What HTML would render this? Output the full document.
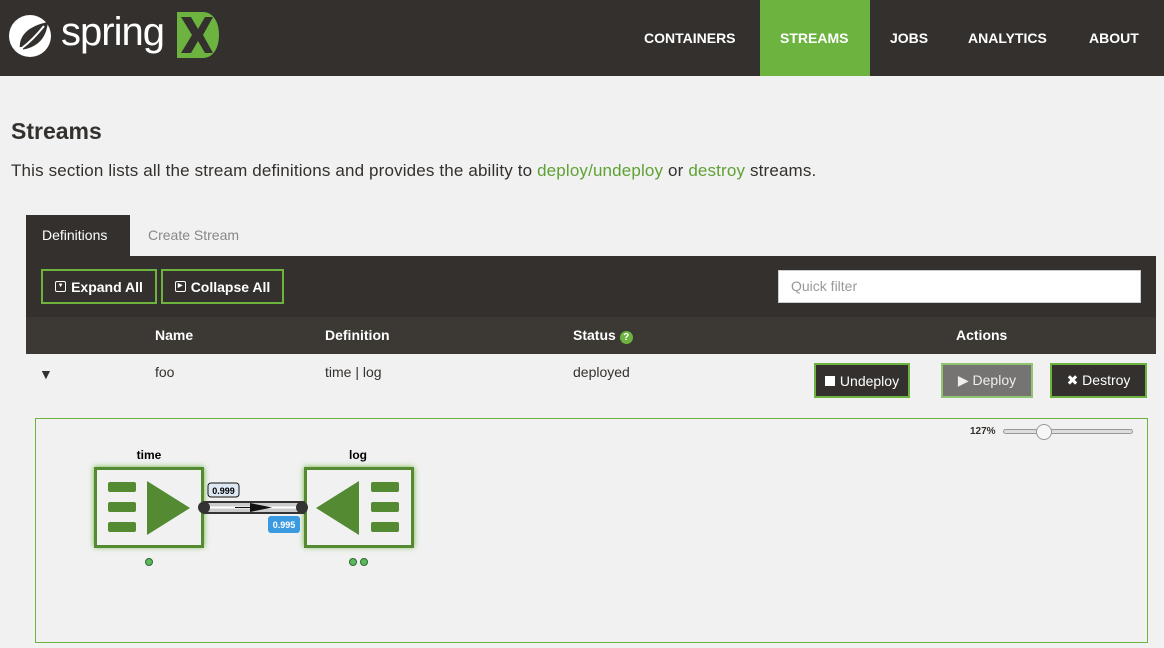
<!DOCTYPE html>
<html><head><meta charset="utf-8"><style>
*{box-sizing:border-box;margin:0;padding:0}
body{width:1164px;height:648px;overflow:hidden;background:#f1f1f1;font-family:"Liberation Sans",sans-serif;color:#34302d;position:relative}
.a{position:absolute}
.hdr{left:0;top:0;width:1164px;height:76px;background:#34302d}
.nav{color:#fff;font-weight:bold;font-size:14px;top:30px}
.btn{border:2px solid #6db33f;color:#fff;font-size:14px;display:flex;align-items:center;justify-content:center;gap:5px}
.th{color:#fff;font-weight:bold;font-size:14px;top:327px}
.td{font-size:14px;top:364px;color:#34302d}
</style></head><body>
<div class="a hdr"></div>
<svg class="a" style="left:6px;top:12px" width="48" height="48" viewBox="0 0 48 48"><circle cx="24" cy="24" r="21" fill="#fff"/><path d="M14 38 C12 24 22 14 42 10 C40 28 30 36 14 38Z" fill="#34302d"/><path d="M16 36 C24 30 30 24 38 14" stroke="#fff" stroke-width="2" fill="none"/><circle cx="15" cy="37" r="2" fill="#fff"/></svg>
<div class="a" style="left:61px;top:10px;color:#fff;font-size:40px;letter-spacing:-1px">spring</div>
<svg class="a" style="left:177px;top:12px" width="42" height="46" viewBox="0 0 42 46"><path d="M0 0H26C36 0 42 10 42 23C42 36 36 46 26 46H0Z" fill="#6db33f"/><path d="M4 5H14L21 17L28 5H36L26 23L36 41H28L21 29L14 41H4L15 23Z" fill="#34302d"/></svg>
<div class="a" style="left:760px;top:0;width:110px;height:76px;background:#6db33f"></div>
<div class="a nav" style="left:644px">CONTAINERS</div>
<div class="a nav" style="left:780px">STREAMS</div>
<div class="a nav" style="left:890px">JOBS</div>
<div class="a nav" style="left:968px">ANALYTICS</div>
<div class="a nav" style="left:1089px">ABOUT</div>
<div class="a" style="left:11px;top:118px;font-size:23px;font-weight:bold;color:#34302d">Streams</div>
<div class="a" style="left:11px;top:161px;font-size:17px;letter-spacing:0.15px;white-space:nowrap">This section lists all the stream definitions and provides the ability to <span style="color:#5fa134">deploy/undeploy</span> or <span style="color:#5fa134">destroy</span> streams.</div>
<div class="a" style="left:26px;top:215px;width:104px;height:42px;background:#34302d;color:#fff;font-size:14px;padding:12px 0 0 16px">Definitions</div>
<div class="a" style="left:148px;top:227px;font-size:14px;color:#888">Create Stream</div>
<div class="a" style="left:26px;top:256px;width:1130px;height:61px;background:#34302d"></div>
<div class="a btn" style="left:41px;top:269px;width:116px;height:35px;font-weight:bold"><span style="display:inline-block;width:11px;height:11px;border:1.5px solid #fff;border-radius:2px;font-size:6px;line-height:8px;text-align:center">▼</span>Expand All</div>
<div class="a btn" style="left:161px;top:269px;width:123px;height:35px;font-weight:bold"><span style="display:inline-block;width:11px;height:11px;border:1.5px solid #fff;border-radius:2px;font-size:6px;line-height:8px;text-align:center">▶</span>Collapse All</div>
<div class="a" style="left:778px;top:270px;width:363px;height:33px;background:#fff;border:1px solid #ccc;color:#999;font-size:14px;padding:7px 12px">Quick filter</div>
<div class="a" style="left:26px;top:317px;width:1130px;height:37px;background:#3c3834"></div>
<div class="a th" style="left:155px">Name</div>
<div class="a th" style="left:325px">Definition</div>
<div class="a th" style="left:573px">Status <span style="display:inline-block;width:13px;height:13px;border-radius:50%;background:#6db33f;font-size:10px;text-align:center;line-height:13px">?</span></div>
<div class="a th" style="left:956px">Actions</div>
<div class="a" style="left:39px;top:366px;font-size:14px">▼</div>
<div class="a td" style="left:155px">foo</div>
<div class="a td" style="left:325px">time | log</div>
<div class="a td" style="left:573px">deployed</div>
<div class="a btn" style="left:814px;top:363px;width:96px;height:35px;background:#34302d"><span style="display:inline-block;width:10px;height:10px;background:#fff"></span>Undeploy</div>
<div class="a btn" style="left:941px;top:363px;width:92px;height:35px;background:#767472;border-color:#8fc471;color:#eee">▶ Deploy</div>
<div class="a btn" style="left:1050px;top:363px;width:97px;height:35px;background:#34302d">✖ Destroy</div>
<div class="a" style="left:35px;top:418px;width:1113px;height:225px;border:1px solid #6db33f"></div>
<div class="a" style="left:970px;top:426px;font-size:10px;font-weight:bold">127%</div>
<div class="a" style="left:1003px;top:429px;width:130px;height:5px;border:1px solid #999;border-radius:3px;background:#ddd"></div>
<div class="a" style="left:1036px;top:424px;width:16px;height:16px;border-radius:50%;border:1px solid #999;background:#f6f6f6"></div>
<svg class="a" style="left:80px;top:440px" width="360" height="140" viewBox="80 440 360 140">
<defs><filter id="g" x="-30%" y="-30%" width="160%" height="160%"><feGaussianBlur stdDeviation="3"/></filter></defs>
<text x="149" y="459" font-size="12" font-weight="bold" text-anchor="middle" font-family="Liberation Sans">time</text>
<text x="358" y="459" font-size="12" font-weight="bold" text-anchor="middle" font-family="Liberation Sans">log</text>
<rect x="94" y="467" width="110" height="80" fill="#6db33f" filter="url(#g)"/>
<rect x="304" y="467" width="110" height="80" fill="#6db33f" filter="url(#g)"/>
<rect x="95.5" y="468.5" width="107" height="78" fill="#f1f1f1" stroke="#548a32" stroke-width="3"/>
<rect x="305.5" y="468.5" width="107" height="78" fill="#f1f1f1" stroke="#548a32" stroke-width="3"/>
<g fill="#548a32"><rect x="108" y="482" width="28" height="10" rx="2"/><rect x="108" y="502" width="28" height="10" rx="2"/><rect x="108" y="522" width="28" height="10" rx="2"/><path d="M147 481L190 508L147 535Z"/>
<rect x="371" y="482" width="28" height="10" rx="2"/><rect x="371" y="502" width="28" height="10" rx="2"/><rect x="371" y="522" width="28" height="10" rx="2"/><path d="M359 481L316 508L359 535Z"/></g>
<rect x="204" y="502" width="100" height="11" fill="#ccc" stroke="#333" stroke-width="2"/>
<line x1="206" y1="507.5" x2="302" y2="507.5" stroke="#fff" stroke-width="2"/>
<path d="M235 507H250V503L272 507.5L250 512V508H235Z" fill="#111"/>
<circle cx="204" cy="507.5" r="6" fill="#333"/><circle cx="302" cy="507.5" r="6" fill="#333"/>
<rect x="208" y="483" width="31" height="14" rx="3" fill="#dde8f5" stroke="#111"/>
<text x="223.5" y="494" font-size="9" font-weight="bold" text-anchor="middle" font-family="Liberation Sans">0.999</text>
<rect x="268" y="516" width="32" height="17" rx="3" fill="#3a9ae0"/>
<text x="284" y="528" font-size="9" font-weight="bold" fill="#fff" text-anchor="middle" font-family="Liberation Sans">0.995</text>
<circle cx="149" cy="562" r="3.5" fill="#5cb85c" stroke="#2d6a2d"/>
<circle cx="353" cy="562" r="3.5" fill="#5cb85c" stroke="#2d6a2d"/>
<circle cx="364" cy="562" r="3.5" fill="#5cb85c" stroke="#2d6a2d"/>
</svg>
</body></html>
